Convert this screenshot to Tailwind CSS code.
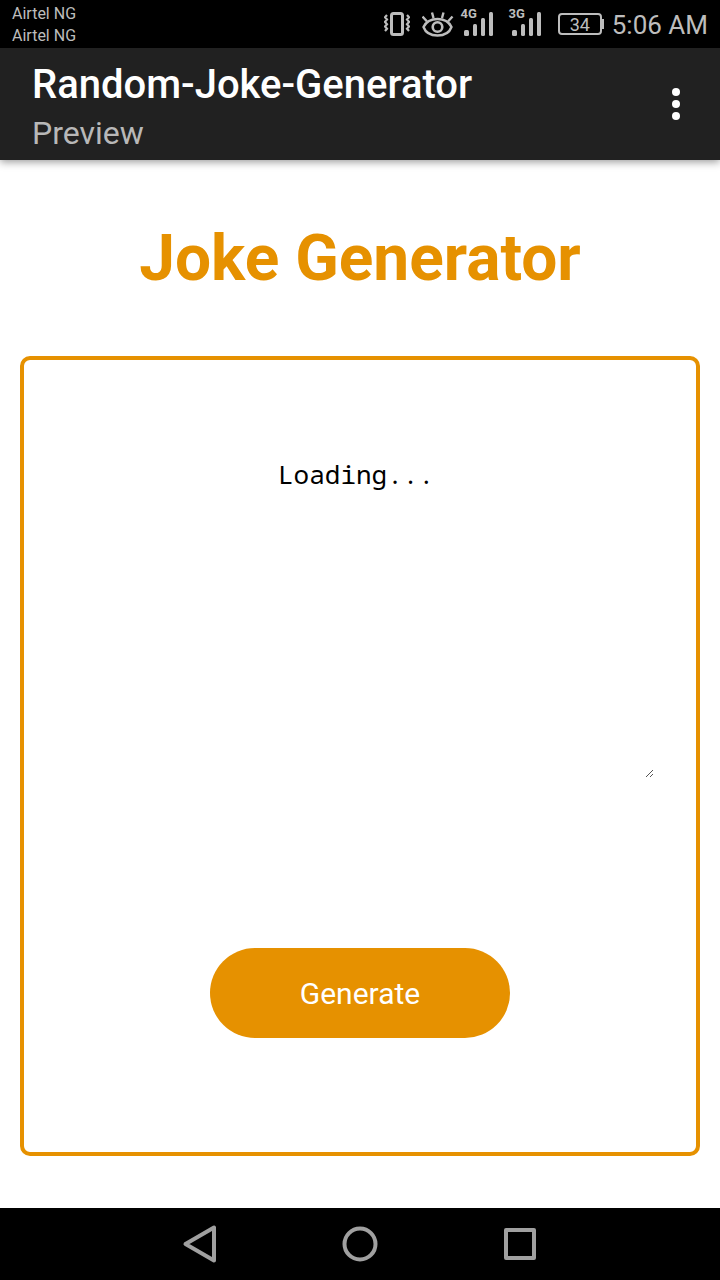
<!DOCTYPE html>
<html lang="en">
<head>
<meta charset="utf-8">
<meta name="viewport" content="width=device-width, initial-scale=1">
<title>Random-Joke-Generator</title>
<script src="https://cdn.jsdelivr.net/npm/@tailwindcss/browser@4"></script>
</head>
<body class="flex min-h-screen flex-col bg-white font-['Roboto',sans-serif]">
  <div class="flex h-12 shrink-0 items-center justify-between bg-black px-3 text-[#bdbdbd]">
    <div class="pt-0.5 text-base leading-[22px]">
      <p>Airtel NG</p>
      <p>Airtel NG</p>
    </div>
    <div class="flex items-center">
      <svg class="mr-3 h-12 w-[26px]" viewBox="382 0 26 48" fill="none" stroke="currentColor" aria-label="Vibrate">
        <rect x="389.5" y="13.5" width="11" height="21" rx="2" stroke-width="3"/>
        <path d="M385 15l-2 2.300 2 2.300-2 2.300 2 2.300-2 2.300 2 2.300-2 2.200M405 15l2 2.300-2 2.300 2 2.300-2 2.300 2 2.300-2 2.300 2 2.200" stroke-width="2.200"/>
      </svg>
      <svg class="mr-2 h-12 w-8" viewBox="420 0 32 48" fill="none" stroke="currentColor" aria-label="Eye comfort">
        <path d="M421.500 27C424 22 429 19 435.500 19s11.500 3 14 8c-2 5.500-7.500 8.500-14 8.500s-12-3-14-8.500z" stroke-width="2.400"/>
        <circle cx="435.500" cy="27" r="4.800" stroke-width="2.600"/>
        <path d="M420.500 16.500l4.500 5M430 12.500l1.500 5.500M441.500 12.500L440 18M450.500 16.500l-4.500 5" stroke-width="2.400"/>
      </svg>
      <svg class="mr-4 h-12 w-8" viewBox="460 0 32 48" fill="currentColor" overflow="visible" aria-label="4G signal">
        <text x="458.500" y="18" class="font-['Roboto',sans-serif] text-[13px] font-bold">4G</text>
        <rect x="462" y="30" width="5" height="6" rx="1.500"/><rect x="471" y="24" width="4" height="12" rx="1.500"/><rect x="479" y="18" width="4" height="18" rx="1.500"/><rect x="487" y="12" width="4" height="24" rx="1.500"/>
      </svg>
      <svg class="mr-4 h-12 w-8" viewBox="508 0 32 48" fill="currentColor" overflow="visible" aria-label="3G signal">
        <text x="506.500" y="18" class="font-['Roboto',sans-serif] text-[13px] font-bold">3G</text>
        <rect x="510" y="30" width="5" height="6" rx="1.500"/><rect x="519" y="24" width="4" height="12" rx="1.500"/><rect x="527" y="18" width="4" height="18" rx="1.500"/><rect x="535" y="12" width="4" height="24" rx="1.500"/>
      </svg>
      <div class="mr-2 flex items-center">
        <span class="flex h-[22px] w-11 items-center justify-center rounded-sm border-2 border-current pt-0.5 text-lg leading-none">34</span>
        <span class="h-2.5 w-0.5 bg-current"></span>
      </div>
      <span class="pt-0.5 text-[26px] leading-[48px]">5:06 AM</span>
    </div>
  </div>

  <header class="relative flex h-28 shrink-0 items-center justify-between bg-[#212121] pr-6 pl-8 shadow-[0_2px_8px_rgba(0,0,0,0.4)]">
    <div class="pt-2.5">
      <h1 class="text-[40px] leading-[48px] font-medium text-white">Random-Joke-Generator</h1>
      <p class="text-[32px] leading-[48px] text-[#b8b8b8]">Preview</p>
    </div>
    <button type="button" class="flex w-10 justify-center text-white" aria-label="More options">
      <svg class="h-12 w-8" viewBox="0 0 32 48" fill="currentColor"><circle cx="16" cy="12" r="4"/><circle cx="16" cy="24" r="4"/><circle cx="16" cy="36" r="4"/></svg>
    </button>
  </header>

  <main class="flex grow flex-col px-5 pt-[60px] pb-[52px]">
    <h2 class="text-center text-[64px] leading-[78px] font-bold text-[#e69100]">Joke Generator</h2>
    <section class="mt-[58px] flex grow flex-col items-center rounded-[10px] border-4 border-[#e69100] px-10 pt-20 pb-[114px]">
      <div class="relative w-full">
        <textarea aria-label="Joke" class="block h-[340px] w-full resize-none pt-4 pr-2 text-center font-['Droid_Sans_Mono','Noto_Sans_Mono','DejaVu_Sans_Mono',monospace] text-[26px] leading-9 text-black outline-none">Loading...</textarea>
        <svg class="pointer-events-none absolute right-px bottom-0.5 h-2.5 w-2.5" viewBox="0 0 10 10" fill="none" stroke="#555" aria-hidden="true"><path d="M1 9L8 2M5 9l3-3"/></svg>
      </div>
      <button type="button" class="mt-auto h-[90px] w-[300px] rounded-full bg-[#e69100] text-[30px] text-white">Generate</button>
    </section>
  </main>

  <nav class="flex h-[72px] shrink-0 items-center justify-center gap-28 bg-black text-[#a0a0a0]" aria-label="System navigation">
    <button type="button" aria-label="Back"><svg class="h-12 w-12" viewBox="0 0 48 48" fill="none" stroke="currentColor" stroke-width="4" stroke-linejoin="round"><path d="M9.500 24L38 7.500V40.500z"/></svg></button>
    <button type="button" aria-label="Home"><svg class="h-12 w-12" viewBox="0 0 48 48" fill="none" stroke="currentColor" stroke-width="4"><circle cx="24" cy="24" r="15.500"/></svg></button>
    <button type="button" aria-label="Recent apps"><svg class="h-12 w-12" viewBox="0 0 48 48" fill="none" stroke="currentColor" stroke-width="4" stroke-linejoin="round"><rect x="10" y="10" width="28" height="28"/></svg></button>
  </nav>
</body>
</html>
